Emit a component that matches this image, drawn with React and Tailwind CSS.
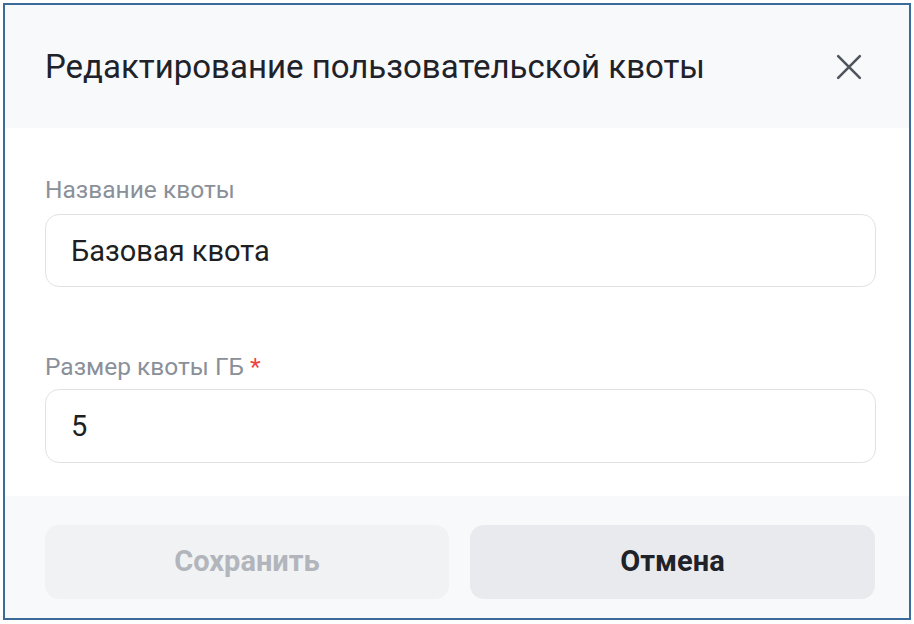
import React, { useState } from 'react';

const App = () => {
    const [name, setName] = useState('Базовая квота');
    const [size, setSize] = useState('5');

    return (
        <div className="w-[914px] h-[624px] bg-white pt-[3px] pl-[3px]" style={{ fontFamily: 'Roboto, "Noto Sans", sans-serif' }}>
            <div className="w-[908px] h-[617px] border-2 border-[#3a6b9b] flex flex-col bg-white">
                {/* Header */}
                <div className="h-[123px] bg-[#f8f9fb] flex items-center justify-between pl-[40px] pr-[46px]">
                    <h2 className="text-[33px] leading-[40px] text-[#1f2329] font-normal">Редактирование пользовательской квоты</h2>
                    <button className="w-[28px] h-[28px] flex items-center justify-center text-[#50565e]">
                        <svg width="26" height="26" viewBox="0 0 24 24" fill="none" stroke="currentColor" strokeWidth="2.4" strokeLinecap="round">
                            <path d="M2 2L22 22M22 2L2 22" />
                        </svg>
                    </button>
                </div>

                {/* Body */}
                <div className="h-[368px] bg-white pl-[40px] pr-[33px] pt-[47px]">
                    <label className="block text-[24.5px] leading-[30px] text-[#8a9099]">Название квоты</label>
                    <input
                        className="mt-[9px] w-full h-[73px] rounded-[14px] border border-[#e0e2e6] px-[25px] text-[29px] text-[#1d1f22] outline-none"
                        value={name}
                        onChange={(e) => setName(e.target.value)}
                    />
                    <label className="block mt-[65px] text-[24.5px] leading-[30px] text-[#8a9099]">
                        Размер квоты ГБ <span className="text-[#ef4444]">*</span>
                    </label>
                    <input
                        className="mt-[7px] w-full h-[74px] rounded-[14px] border border-[#e0e2e6] px-[25px] text-[29px] text-[#1d1f22] outline-none"
                        value={size}
                        onChange={(e) => setSize(e.target.value)}
                    />
                </div>

                {/* Footer */}
                <div className="flex-1 bg-[#f8f9fb] pl-[40px] pr-[33px] pt-[29px] flex gap-[21px]">
                    <button disabled className="w-[404px] h-[74px] rounded-[14px] bg-[#f1f2f4] text-[29px] font-bold text-[#b2b6bc]">
                        Сохранить
                    </button>
                    <button className="w-[405px] h-[74px] rounded-[14px] bg-[#e9eaed] text-[29px] font-bold text-[#1f2329]">
                        Отмена
                    </button>
                </div>
            </div>
        </div>
    );
};

export default App;
